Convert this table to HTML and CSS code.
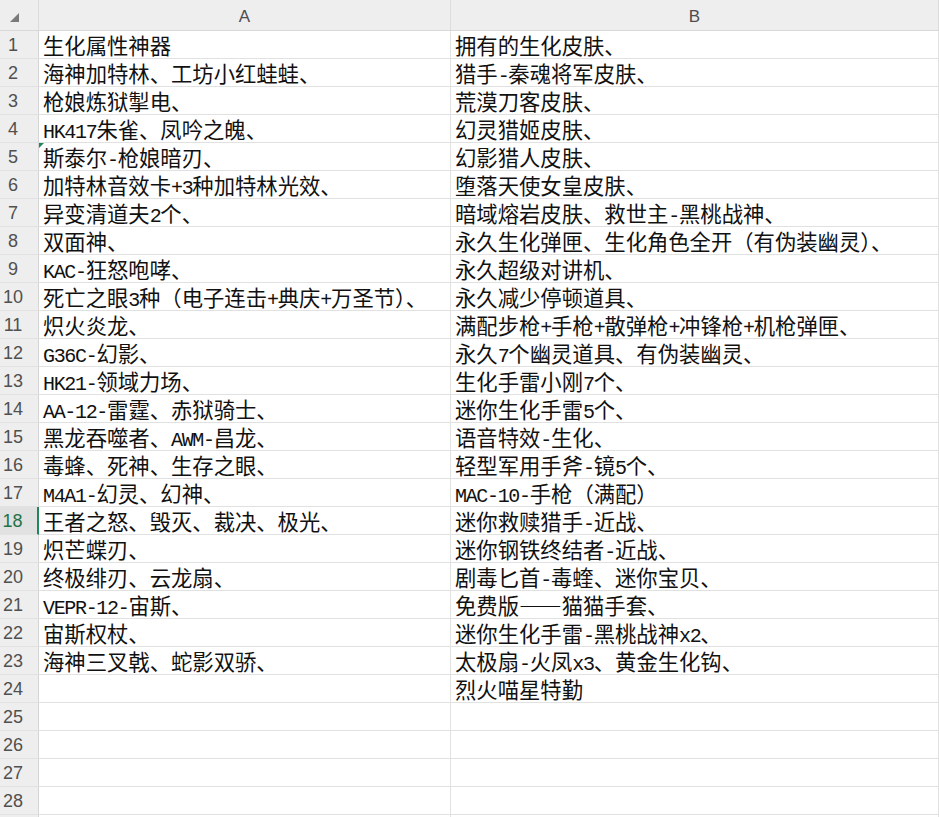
FILE: index.html
```html
<!DOCTYPE html>
<html lang="zh">
<head>
<meta charset="utf-8">
<link rel="stylesheet" href="styles.css">
</head>
<body>
<div class="sheet">
  <div class="corner"><svg class="corner-tri" width="9" height="9" viewBox="0 0 9 9"><polygon points="0,9 9,0 9,9" fill="#7a7a7a"/></svg></div>
  <div class="colh">A</div>
  <div class="colh">B</div>

  <div class="rh">1</div><div class="c">生化属性神器</div><div class="c">拥有的生化皮肤、</div>
  <div class="rh">2</div><div class="c">海神加特林、工坊小红蛙蛙、</div><div class="c">猎手<span class="lat">-</span>秦魂将军皮肤、</div>
  <div class="rh">3</div><div class="c">枪娘炼狱掣电、</div><div class="c">荒漠刀客皮肤、</div>
  <div class="rh">4</div><div class="c"><span class="lat">HK417</span>朱雀、凤吟之魄、</div><div class="c">幻灵猎姬皮肤、</div>
  <div class="rh">5</div><div class="c flag">斯泰尔<span class="lat">-</span>枪娘暗刃、</div><div class="c">幻影猎人皮肤、</div>
  <div class="rh">6</div><div class="c">加特林音效卡<span class="lat">+3</span>种加特林光效、</div><div class="c">堕落天使女皇皮肤、</div>
  <div class="rh">7</div><div class="c">异变清道夫<span class="lat">2</span>个、</div><div class="c">暗域熔岩皮肤、救世主<span class="lat">-</span>黑桃战神、</div>
  <div class="rh">8</div><div class="c">双面神、</div><div class="c">永久生化弹匣、生化角色全开（有伪装幽灵）、</div>
  <div class="rh">9</div><div class="c"><span class="lat">KAC-</span>狂怒咆哮、</div><div class="c">永久超级对讲机、</div>
  <div class="rh">10</div><div class="c">死亡之眼<span class="lat">3</span>种（电子连击<span class="lat">+</span>典庆<span class="lat">+</span>万圣节）、</div><div class="c">永久减少停顿道具、</div>
  <div class="rh">11</div><div class="c">炽火炎龙、</div><div class="c">满配步枪<span class="lat">+</span>手枪<span class="lat">+</span>散弹枪<span class="lat">+</span>冲锋枪<span class="lat">+</span>机枪弹匣、</div>
  <div class="rh">12</div><div class="c"><span class="lat">G36C-</span>幻影、</div><div class="c">永久<span class="lat">7</span>个幽灵道具、有伪装幽灵、</div>
  <div class="rh">13</div><div class="c"><span class="lat">HK21-</span>领域力场、</div><div class="c">生化手雷小刚<span class="lat">7</span>个、</div>
  <div class="rh">14</div><div class="c"><span class="lat">AA-12-</span>雷霆、赤狱骑士、</div><div class="c">迷你生化手雷<span class="lat">5</span>个、</div>
  <div class="rh">15</div><div class="c">黑龙吞噬者、<span class="lat">AWM-</span>昌龙、</div><div class="c">语音特效<span class="lat">-</span>生化、</div>
  <div class="rh">16</div><div class="c">毒蜂、死神、生存之眼、</div><div class="c">轻型军用手斧<span class="lat">-</span>镜<span class="lat">5</span>个、</div>
  <div class="rh">17</div><div class="c"><span class="lat">M4A1-</span>幻灵、幻神、</div><div class="c"><span class="lat">MAC-10-</span>手枪（满配）</div>
  <div class="rh active">18</div><div class="c">王者之怒、毁灭、裁决、极光、</div><div class="c">迷你救赎猎手<span class="lat">-</span>近战、</div>
  <div class="rh">19</div><div class="c">炽芒蝶刃、</div><div class="c">迷你钢铁终结者<span class="lat">-</span>近战、</div>
  <div class="rh">20</div><div class="c">终极绯刃、云龙扇、</div><div class="c">剧毒匕首<span class="lat">-</span>毒蝰、迷你宝贝、</div>
  <div class="rh">21</div><div class="c"><span class="lat">VEPR-12-</span>宙斯、</div><div class="c">免费版——猫猫手套、</div>
  <div class="rh">22</div><div class="c">宙斯权杖、</div><div class="c">迷你生化手雷<span class="lat">-</span>黑桃战神<span class="lat">x2</span>、</div>
  <div class="rh">23</div><div class="c">海神三叉戟、蛇影双骄、</div><div class="c">太极扇<span class="lat">-</span>火凤<span class="lat">x3</span>、黄金生化钩、</div>
  <div class="rh">24</div><div class="c"></div><div class="c">烈火喵星特勤</div>
  <div class="rh">25</div><div class="c"></div><div class="c"></div>
  <div class="rh">26</div><div class="c"></div><div class="c"></div>
  <div class="rh">27</div><div class="c"></div><div class="c"></div>
  <div class="rh">28</div><div class="c"></div><div class="c"></div>
  <div class="rh"></div><div class="c"></div><div class="c"></div>
</div>
</body>
</html>
```
FILE: styles.css
```css
html, body {
  margin: 0;
  padding: 0;
  background: #ffffff;
  overflow: hidden;
}

.sheet {
  display: grid;
  grid-template-columns: 39px 412px 1fr;
  grid-template-rows: 31px;
  grid-auto-rows: 28px;
  width: 939px;
  height: 817px;
  overflow: hidden;
}

.corner,
.colh,
.rh,
.c {
  box-sizing: border-box;
  border-right: 1px solid #e1e1e1;
  border-bottom: 1px solid #e1e1e1;
}

.corner {
  background: #eeeeee;
  border-right-color: #dcdcdc;
  border-bottom-color: #d8d8d8;
  display: flex;
  align-items: flex-start;
  padding: 13px 0 0 10px;
}

.corner-tri {
  display: block;
}

.colh {
  background: #eeeeee;
  border-right-color: #dcdcdc;
  border-bottom-color: #d8d8d8;
  color: #4d4d4d;
  font-family: "Liberation Sans", Arial, sans-serif;
  font-size: 17px;
  display: flex;
  align-items: center;
  justify-content: center;
  padding-top: 3px;
}

.rh {
  background: #eeeeee;
  border-right-color: #d4d4d4;
  border-bottom-color: #e2e2e2;
  color: #505050;
  font-family: "Liberation Sans", Arial, sans-serif;
  font-size: 18px;
  display: flex;
  align-items: center;
  justify-content: center;
  padding-right: 12px;
  padding-top: 1px;
}

.rh.active {
  background: #e1e1e1;
  color: #217346;
  border-right: 2px solid #21865a;
}

.c {
  position: relative;
  font-family: "Noto Sans CJK SC", "Noto Sans", sans-serif;
  font-size: 21.33px;
  color: #111111;
  line-height: 27px;
  padding-left: 4px;
  white-space: nowrap;
}

.lat {
  font-family: "Liberation Mono", monospace;
  font-size: 20px;
  letter-spacing: -1.33px;
  line-height: 20px;
}

.flag::before {
  content: "";
  position: absolute;
  left: 0;
  top: 0;
  border-top: 5px solid #21865a;
  border-right: 5px solid transparent;
}
```
